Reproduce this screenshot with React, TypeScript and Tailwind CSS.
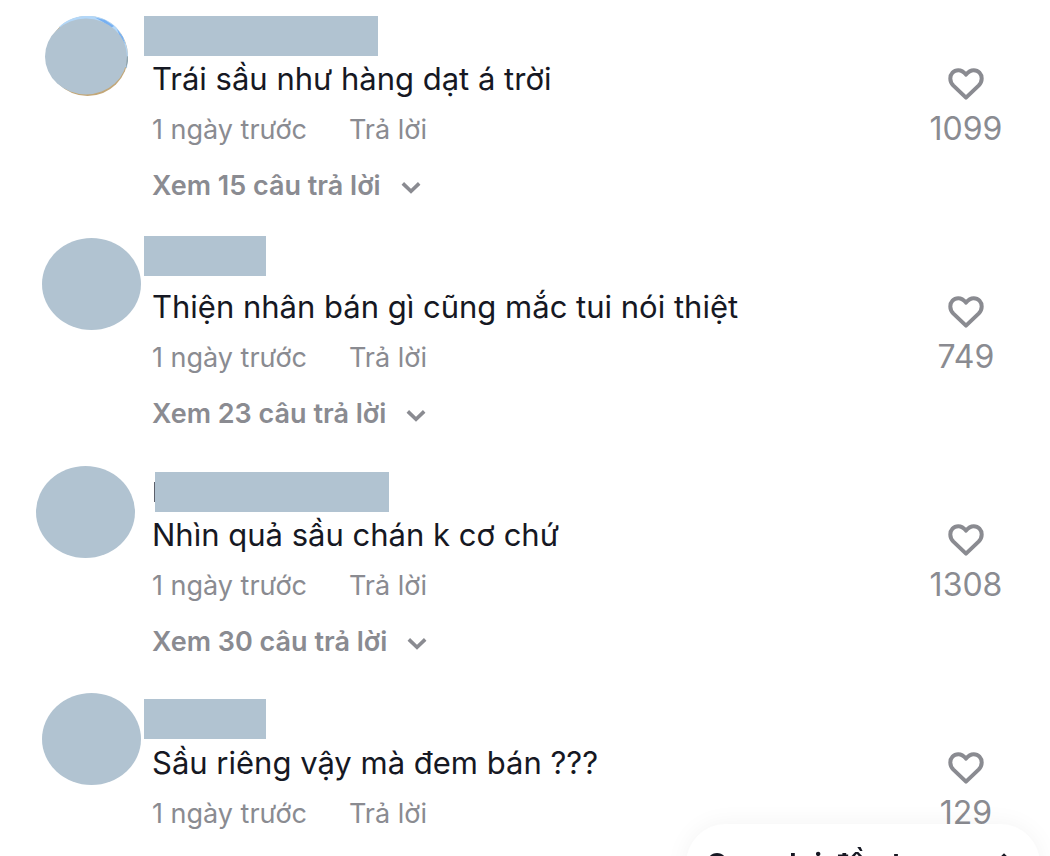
type Comment = {
  id: number;
  text: string;
  likes: number;
  replies: number;
  avatar: string;
  name: string;
  cover: boolean;
  nameEdge: boolean;
};

const comments: Comment[] = [
  {
    id: 1,
    text: "Trái sầu như hàng dạt á trời",
    likes: 1099,
    replies: 15,
    avatar: "ml-[45px] mt-4 h-20 w-[83px]",
    name: "mt-4 w-[234px]",
    cover: true,
    nameEdge: false,
  },
  {
    id: 2,
    text: "Thiện nhân bán gì cũng mắc tui nói thiệt",
    likes: 749,
    replies: 23,
    avatar: "ml-[42px] mt-2.5 h-[92px] w-[99px]",
    name: "mt-2 w-[122px]",
    cover: false,
    nameEdge: false,
  },
  {
    id: 3,
    text: "Nhìn quả sầu chán k cơ chứ",
    likes: 1308,
    replies: 30,
    avatar: "ml-9 mt-2.5 h-[92px] w-[99px]",
    name: "mt-4 w-[234px]",
    cover: false,
    nameEdge: true,
  },
  {
    id: 4,
    text: "Sầu riêng vậy mà đem bán ???",
    likes: 129,
    replies: 9,
    avatar: "ml-[42px] mt-[9px] h-[92px] w-[99px]",
    name: "mt-[15px] w-[122px]",
    cover: false,
    nameEdge: false,
  },
];

function Heart() {
  return (
    <svg viewBox="0 0 40 40" className="size-10" fill="none" stroke="currentColor" strokeWidth="4" strokeLinejoin="round" aria-hidden="true">
      <path d="M20 10.6C17.6 7.5 14.9 6.2 12.2 6.2C7.6 6.2 4.3 9.9 4.3 14.4C4.3 17.3 5.4 19.5 7.4 21.6L20 33.6L32.6 21.6C34.6 19.5 35.7 17.3 35.7 14.4C35.7 9.9 32.4 6.2 27.8 6.2C25.1 6.2 22.4 7.5 20 10.6Z" />
    </svg>
  );
}

function Chevron() {
  return (
    <svg viewBox="0 0 20 20" className="size-5" fill="none" stroke="currentColor" strokeWidth="3.6" aria-hidden="true">
      <path d="M1.8 7.4L10 15.2L18.2 7.4" />
    </svg>
  );
}

function Avatar({ className, cover }: { className: string; cover: boolean }) {
  return (
    <svg viewBox="0 0 83 80" preserveAspectRatio="none" className={className} aria-hidden="true">
      {cover && (
        <>
          <ellipse cx="42.5" cy="40" rx="40.5" ry="40" fill="#c3a778" />
          <path d="M14 11C29 -4 56 -4 71 11C79 20 83 30 83 42L82 52L60 40L30 20Z" fill="#b3d7f8" />
          <path d="M50 1.5L60 4L69 10L66 12L58 6ZM72 13L78 21L80 28L75 21Z" fill="#77b0f2" />
          <path d="M83 40L83 45L81 53L80 42Z" fill="#8fa3ab" />
        </>
      )}
      <ellipse cx={cover ? 41 : 41.5} cy={cover ? 40.5 : 40} rx={cover ? 41 : 41.5} ry={cover ? 38 : 40} fill="#b1c3d1" />
    </svg>
  );
}

function CommentRow({ comment }: { comment: Comment }) {
  return (
    <article className="flex shrink-0 items-start pb-6">
      <div className="w-36 shrink-0">
        <Avatar className={comment.avatar} cover={comment.cover} />
      </div>
      <div className="min-w-0 flex-1">
        <div className="flex h-15 items-start">
          {comment.nameEdge && <span className="mt-[26px] ml-2.5 h-5 w-px bg-[#5c606b]" />}
          <span className={`h-10 bg-[#b1c3d1] ${comment.name}`} />
        </div>
        <div className="pl-2">
          <p className="text-[31px] leading-[38px] text-[#161823]">{comment.text}</p>
          <div className="mt-3.5 flex gap-[42px] text-[27px] leading-9">
            <time>1 ngày trước</time>
            <button type="button">Trả lời</button>
          </div>
          <button type="button" className="mt-5 flex items-center gap-5 text-[27px] leading-9 font-semibold">
            Xem {comment.replies} câu trả lời
            <Chevron />
          </button>
        </div>
      </div>
      <button type="button" aria-label={`Thích, ${comment.likes}`} className="flex w-42 shrink-0 flex-col items-center gap-[5px] pt-16 text-[32px] leading-10">
        <Heart />
        {comment.likes}
      </button>
    </article>
  );
}

export default function App() {
  return (
    <main className="flex h-screen flex-col overflow-hidden bg-white font-['Inter','Noto_Sans',sans-serif] text-[#8a8b91]">
      {comments.map((comment) => (
        <CommentRow key={comment.id} comment={comment} />
      ))}
      <button
        type="button"
        className="fixed right-2.5 -bottom-12 flex h-20 items-center gap-5 rounded-full bg-white px-5 text-[30px] font-semibold text-[#161823] shadow-[0_0_24px_rgba(0,0,0,0.05)]"
      >
        Quay lại đầu trang
        <svg viewBox="0 0 32 32" className="size-8" fill="none" stroke="currentColor" strokeWidth="4" aria-hidden="true">
          <path d="M16 30V12M6 18L16 8L26 18" />
        </svg>
      </button>
    </main>
  );
}
